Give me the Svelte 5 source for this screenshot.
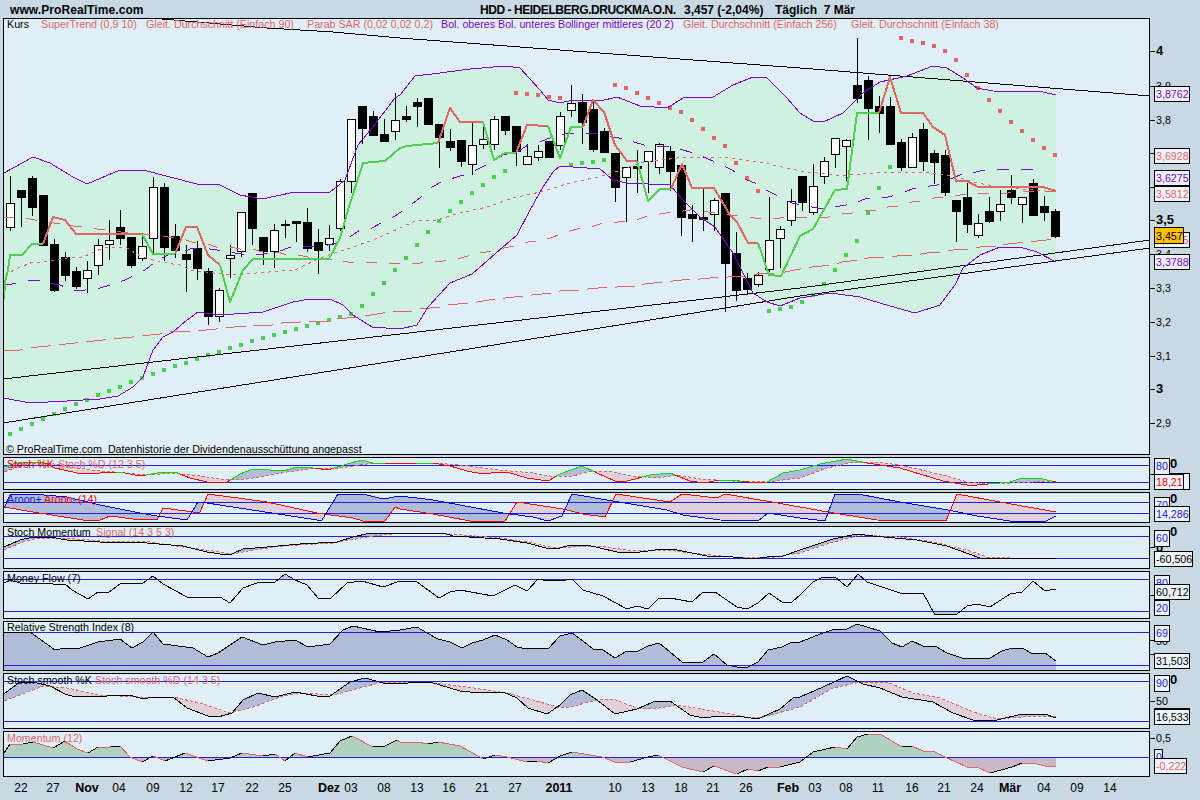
<script>
  const parse = (s) => s.trim().split(/\s+/).map((p) => p.split(',').map(Number));

  function interp(pts, x) {
    if (x <= pts[0][0]) return pts[0][1];
    for (let i = 1; i < pts.length; i++) {
      if (x <= pts[i][0]) {
        const [x0, y0] = pts[i - 1];
        const [x1, y1] = pts[i];
        return y0 + ((y1 - y0) * (x - x0)) / (x1 - x0 || 1);
      }
    }
    return pts[pts.length - 1][1];
  }

  const X0 = 4;
  const X1 = 1056;

  // polygons between two series, coloured by which one lies on top
  function between(a, b, above, below) {
    const out = [];
    let cur = null;
    const flush = () => {
      if (!cur) return;
      const fill = cur.up ? above : below;
      if (fill) out.push({ d: cur.t.concat(cur.b).join(' '), fill });
    };
    for (let x = X0; x <= X1; x++) {
      const ya = interp(a, x);
      const yb = typeof b === 'number' ? b : interp(b, x);
      const up = ya < yb;
      if (!cur || cur.up !== up) {
        if (cur) {
          cur.t.push(x + ',' + ya);
          cur.b.unshift(x + ',' + yb);
        }
        flush();
        cur = { up, t: [], b: [] };
      }
      cur.t.push(x + ',' + ya);
      cur.b.unshift(x + ',' + yb);
    }
    flush();
    return out;
  }

  // one series whose colour depends on a second series
  function splitBy(a, b, above, below) {
    const out = [];
    let cur = null;
    for (let x = X0; x <= X1; x++) {
      const ya = interp(a, x);
      const up = ya <= interp(b, x);
      if (!cur || cur.up !== up) {
        const prev = cur ? cur.p[cur.p.length - 1] : null;
        cur = { up, p: prev ? [prev] : [] };
        out.push(cur);
      }
      cur.p.push(x + ',' + ya);
    }
    return out.map((r) => ({ d: r.p.join(' '), stroke: r.up ? above : below }));
  }

  function slopeSegs(pts, rising, falling) {
    return pts.slice(1).map((p, i) => ({
      d: pts[i].join(',') + ' ' + p.join(','),
      stroke: p[1] < pts[i][1] ? rising : falling,
    }));
  }

  const BLUE = '#b0bcd8';
  const PINK = '#e0d0da';
  const RED = '#e06666';

  // [top, bottom, high, low, white]
  const candles = [
    [203,227,176,231,1],[190,197,190,227],[178,207,176,216],[195,245,195,245],[244,290,239,292],
    [257,275,252,281],[271,286,267,289],[270,278,261,293,1],[245,265,239,275,1],[240,244,220,260,1],
    [227,238,210,245],[237,265,237,268],[246,258,235,261,1],[187,238,177,255,1],[187,247,183,261],
    [236,250,224,258],[254,259,245,292],[248,268,241,280],[271,316,268,325],[290,316,288,322,1],
    [255,258,245,278,1],[212,251,212,257,1],[193,228,193,245],[237,251,237,265],[230,251,224,268,1],
    [224,225,220,238],[221,223,221,242],[222,248,208,252],[242,250,229,274],[238,244,225,251,1],
    [181,228,179,231,1],[119,181,119,193,1],[106,128,106,144],[116,135,111,135],[134,141,119,142],
    [120,131,93,140,1],[116,119,106,122],[102,106,98,127],[98,124,98,125],[124,137,124,168],
    [141,147,129,151],[140,161,140,167],[145,164,123,175,1],[139,144,127,149,1],[119,144,116,150,1],
    [116,130,116,135],[126,151,126,166],[156,164,144,164,1],[151,157,145,161,1],[141,157,141,157],
    [116,145,112,150,1],[103,110,85,117,1],[102,122,94,144],[109,149,102,152],[131,152,128,152],
    [153,187,153,202],[167,177,167,222,1],[166,168,150,193],[151,161,151,193,1],[144,167,143,174,1],
    [151,171,146,191],[165,217,165,236],[214,218,205,242],[217,219,189,231],[200,214,198,231,1],
    [193,263,193,312],[253,290,232,301],[278,289,273,295],[275,284,272,287,1],[240,269,197,272,1],
    [229,238,226,268,1],[201,220,189,226,1],[176,202,176,211],[186,212,164,215,1],[161,176,157,184,1],
    [138,154,138,168,1],[140,146,139,181,1],[85,98,38,103],[80,108,76,140],[106,113,96,133],
    [106,144,97,144],[142,167,139,171],[137,167,133,167,1],[129,161,123,171],[153,162,150,184],
    [155,192,150,196],[200,211,200,242],[197,224,183,233],[223,235,214,238,1],[211,221,197,223],
    [204,211,190,221,1],[190,197,175,204],[197,204,197,223,1],[183,215,179,216],[206,212,196,221],
    [211,236,209,238],
  ].map((c, i) => ({ x: 10.5 + 11 * i, top: c[0], bottom: c[1], high: c[2], low: c[3], white: !!c[4] }));

  const bolUp = parse(`4,173 33,157 50,163 73,177 87,184 120,170 143,170 170,177 197,184 220,185 240,195 262,199 295,192 330,192 345,180
    358,145 372,128 395,98 400,95 415,76 440,73 470,69 505,66 520,68 540,90 548,100 560,103 573,100 600,101 617,97 640,106 667,108 683,98
    713,97 733,85 753,77 767,78 787,98 800,113 813,121 823,122 843,113 863,93 880,82 907,76 933,66 947,68 963,78 977,88 993,91 1043,92 1056,95`);
  const bolLow = parse(`4,398 30,403 67,401 100,399 118,396 133,387 143,377 153,350 163,337 173,332 187,320 198,312 220,315 263,312 293,302
    310,299 330,299 343,305 353,315 372,327 400,329 417,325 428,307 450,283 472,274 503,247 517,235 530,210 543,187 553,172 560,166 600,169
    613,180 627,183 670,185 683,200 700,217 715,227 733,253 753,293 767,302 780,306 800,298 830,293 860,297 890,306 915,313 940,305 955,285
    963,268 980,255 1000,247 1020,247 1037,252 1056,262`);
  const bolFill = bolUp.map((p) => p.join(',')).concat(bolLow.slice().reverse().map((p) => p.join(','))).join(' ');

  const superTrend = [
    ['g', '4,299 5,282 8,270 10,255 22,255 32,244 43,244'],
    ['r', '43,244 53,217 65,220 76,234 142,234'],
    ['g', '142,234 153,254 175,254'],
    ['r', '175,254 186,227 197,227 208,255 220,265'],
    ['g', '220,265 230,302 243,270 253,259 329,259 340,238 348,210 363,163 385,161 400,148 407,146 438,143'],
    ['r', '438,143 450,108 460,122 483,122'],
    ['g', '483,122 494,160 505,153 516,153'],
    ['r', '516,153 527,125 548,126'],
    ['g', '548,126 560,158 571,127 583,127'],
    ['r', '583,127 593,100 604,112 615,145 627,161 637,161'],
    ['g', '637,161 648,201 660,189 671,189'],
    ['r', '671,189 682,164 692,188 714,188 730,215 737,222 748,243 758,243'],
    ['g', '758,243 769,275 781,276 800,236 813,229 835,190 847,189 857,113 879,113'],
    ['r', '879,113 890,77 901,113 923,113 933,127 945,135 956,181 967,181 978,187 1043,187 1056,191'],
  ];

  const sarGreen = parse(`10,434 21,429 32,424 43,419 54,414 65,409 76,404 87,400 98,395 109,391 120,387 131,382 142,378 153,374 164,370
    175,366 186,363 197,359 208,355 219,352 230,348 241,345 252,341 263,338 274,335 285,332 296,329 307,326 318,323 329,320 340,317 351,314
    362,306 373,294 384,283 395,270 406,258 417,245 428,232 439,221 450,211 461,202 472,193 483,185 494,177 505,171 571,165 582,163 593,162
    604,160 769,311 780,309 791,307 802,302 813,295 824,284 835,270 846,255 857,241 868,213 879,188 890,167`);
  const sarRed = parse(`516,93 527,94 538,95 549,97 560,98 615,85 626,88 637,93 648,98 659,103 670,108 681,112 692,120 703,129 714,138 725,146
    736,163 747,178 758,191 901,38 912,41 923,43 934,46 945,51 956,60 967,75 978,88 989,100 1000,111 1011,122 1022,131 1033,140 1044,148 1055,155`);

  const bolMid = `4,285 12,284 25,281 35,280 50,283 60,285 72,290 85,290 100,288 110,285 125,280 145,270 155,262 168,255 180,253 193,248 203,248
    217,250 227,252 242,254 252,255 263,254 275,253 288,248 300,247 313,246 323,246 337,243 347,239 360,230 372,228 383,222 395,216 408,207
    420,198 432,187 443,181 457,177 467,174 480,168 492,162 503,155 517,152 528,145 540,142 557,135 565,134 577,133 588,133 600,134 613,137
    625,139 637,143 648,146 660,146 672,146 683,150 697,154 708,159 720,164 732,170 745,179 757,184 768,191 780,197 792,203 817,208 828,208
    840,206 852,204 865,199 876,198 888,197 900,194 912,189 924,187 937,185 948,180 960,175 972,173 984,170 997,170 1008,169 1020,169 1032,169 1044,173`;
  const ma256 = `3,350 20,350 28,348 48,346 57,345 75,343 85,342 103,340 113,339 132,337 140,336 160,334 170,332 188,331 197,331 216,329 225,328 243,326
    253,326 272,325 282,323 300,322 308,321 328,321 337,319 357,317 365,316 383,313 393,312 400,311 412,311 420,309 440,307 448,305 468,303 477,302
    495,299 505,298 523,296 532,295 552,293 560,291 580,290 588,289 608,287 617,287 637,286 645,284 663,282 673,281 692,279 700,279 720,277 728,277
    748,276 757,274 777,273 785,272 800,269 812,267 832,265 842,262 858,260 868,258 888,257 897,256 915,255 927,253 943,252 953,250 972,249 980,247
    998,246 1008,244 1027,242 1037,241 1055,239`;
  const ma90 = `3,217 10,217 24,218 35,220 73,226 83,227 97,229 108,230 121,232 133,233 144,234 157,235 168,237 180,238 192,242 203,242 216,247 230,247 240,249
    252,249 263,252 277,252 288,255 299,255 312,258 323,258 337,261 348,262 360,262 372,262 383,263 395,263 408,263 420,263 433,262 443,261 457,259
    468,256 480,253 492,251 504,248 515,246 528,242 540,241 553,237 563,233 577,229 588,228 600,224 612,223 625,221 636,220 648,216 660,214 673,212
    683,211 697,209 708,212 745,217 755,218 768,218 780,218 800,217 817,217 828,217 842,214 852,213 865,211 876,210 888,207 900,206 912,202 924,201
    937,197 948,197 960,195 972,194 984,193 997,193 1008,193 1033,191 1056,192`;
  const ma38 = `5,275 18,268 33,262 43,262 67,258 83,257 103,248 117,247 127,248 140,256 160,262 180,265 190,270 230,275 295,270 320,258 350,248 373,240 400,228
    417,220 437,220 460,213 487,207 513,198 540,192 570,183 607,175 640,163 677,158 720,157 760,162 800,171 833,175 850,175 877,173 900,172 933,173
    957,177 977,183 1000,187 1033,190 1056,192`;

  const trends = ['162,19 267,28 333,32 400,38 800,68 1150,96', '3,379 400,334 800,288 1150,240', '3,423 400,360 800,296 1150,248'];

  const k = parse(`4,467 13,464 30,462 43,462 55,468 77,473 100,473 120,472 140,476 163,472 175,472 190,478 207,482 227,482 240,474 253,469 270,470 283,471
    297,467 313,468 328,470 347,464 362,460 373,463 400,464 417,463 433,463 450,466 467,471 483,474 500,472 507,472 527,478 548,481 560,474 582,466 597,473
    615,481 627,481 650,475 670,473 690,481 703,483 720,480 740,481 757,483 767,482 783,473 800,470 820,464 847,459 867,463 900,468 943,481 967,485 977,485
    1000,483 1010,482 1022,478 1043,479 1056,482`);
  const d = parse(`4,472 17,467 33,463 47,463 60,465 77,468 100,471 127,473 147,475 173,473 200,476 220,479 240,480 260,477 287,472 317,468 340,468 367,464 400,463
    433,463 460,465 500,470 533,473 550,476 573,476 587,472 607,471 633,476 657,478 677,475 700,479 733,481 767,482 800,478 827,468 850,463 877,462 900,465
    943,475 967,482 990,484 1010,483 1033,482 1056,481`);
  const aroonUp = parse(`4,508 10,495 33,494 67,497 100,505 140,513 157,516 187,520 198,502 207,503 317,520 322,520 338,494 363,494 383,499 400,496 433,500 503,513 510,514
    533,517 548,521 562,516 572,494 613,501 667,510 683,515 720,520 758,521 768,513 800,518 825,521 835,494 858,494 900,502 948,510 977,516 1010,521 1046,521 1056,516`);
  const aroonDown = parse(`4,507 33,512 83,520 100,520 110,516 133,519 157,520 163,508 193,512 200,512 208,494 267,502 317,513 353,518 363,521 385,521 395,507 400,509 433,514
    470,521 505,521 517,502 563,509 583,514 605,517 616,494 670,502 682,494 717,498 725,494 772,502 800,507 828,512 877,520 946,521 957,494 1000,502 1056,512`);
  const smi = parse(`4,547 20,540 33,537 50,537 67,540 100,542 133,542 147,543 183,546 207,552 220,554 232,554 243,549 267,547 300,544 337,542 353,537 370,533 443,533 453,536
    500,539 527,543 550,549 560,548 570,545 587,545 617,552 640,552 663,549 677,550 707,556 733,557 753,559 767,557 783,556 800,550 833,539 857,534 873,536 917,540
    947,546 980,558 1056,558`);
  const smiSig = parse(`4,550 20,543 37,538 67,538 100,541 150,542 183,547 213,551 233,554 253,550 283,546 333,543 367,537 400,533 450,534 500,538 527,542 550,547 573,547 600,546
    633,551 667,550 700,554 733,557 767,558 800,553 830,543 860,535 900,537 933,542 967,550 987,557 1010,558`);
  const mfi = parse(`4,583 10,580 20,583 33,584 43,583 53,584 65,584 72,590 88,599 98,592 108,593 120,584 143,583 153,576 163,584 187,597 220,597 230,603 243,588 257,583 275,582
    285,574 295,580 307,585 318,598 330,599 347,583 362,581 383,587 400,581 417,582 439,598 450,592 460,590 493,596 515,585 527,591 538,579 543,580 566,580 572,579 583,590
    603,596 627,609 637,606 648,609 658,599 670,598 692,602 703,592 715,592 737,607 747,609 758,603 769,593 782,602 792,602 800,595 813,582 823,577 835,577 847,587 858,574
    867,582 900,593 923,593 935,615 957,614 967,606 977,604 990,607 1010,594 1022,592 1033,581 1045,591 1056,589`);
  const rsi = parse(`4,632 30,632 55,650 65,648 77,649 98,642 120,639 132,648 143,642 153,632 163,644 193,648 208,657 218,653 242,637 263,645 275,642 295,640 308,647 330,644 343,630
    353,626 380,632 400,630 417,627 427,633 438,639 450,642 462,648 472,643 483,640 495,635 507,640 517,647 527,649 537,648 548,649 560,636 572,633 583,641 593,649 603,650 615,658
    627,651 638,651 648,646 659,643 670,652 682,662 703,662 714,654 727,665 737,667 748,667 758,662 768,650 782,647 792,642 800,642 823,633 835,629 847,629 857,624 880,631 892,643
    902,647 912,641 923,646 935,646 947,653 965,659 990,658 1002,651 1012,648 1022,648 1033,654 1045,653 1056,661`);
  const ss = parse(`4,694 20,682 33,682 50,686 65,694 75,697 107,696 117,695 133,696 143,699 153,697 173,697 187,708 208,716 218,717 232,713 243,700 258,693 275,697 295,692 317,696 330,696
    350,682 365,678 383,683 400,684 417,682 430,682 460,691 480,693 503,692 517,698 528,708 547,714 560,705 570,695 582,690 597,700 615,714 637,709 653,702 670,701 690,715 703,718
    720,716 737,716 758,719 780,709 793,698 800,697 823,687 847,676 863,684 880,688 902,697 933,702 953,713 973,720 993,721 1022,714 1045,714 1056,718`);
  const ssD = parse(`4,701 20,695 43,686 67,688 100,695 140,697 173,697 200,703 230,713 253,707 283,696 300,693 333,695 360,688 383,682 400,682 433,683 467,687 507,693 540,702 557,707 570,707
    597,700 613,699 637,708 653,709 677,705 713,711 747,717 763,717 800,707 833,688 860,682 887,682 913,693 940,698 973,712 997,719 1033,716 1056,716`);
  const mom = parse(`4,753 10,744 23,744 33,742 53,748 65,741 77,749 88,753 98,747 110,747 120,746 130,757 142,762 153,756 165,761 185,753 208,761 230,758 242,753 263,756 275,754 285,761 295,753
    308,757 330,753 340,741 352,736 373,747 385,746 397,740 400,742 417,742 428,744 438,742 460,746 480,757 483,759 495,755 507,757 527,762 537,761 548,763 560,756 572,752 602,757 615,762
    630,762 648,757 658,755 682,767 703,772 714,766 737,774 748,769 758,771 768,767 780,767 800,762 813,752 835,747 847,749 857,737 868,734 880,734 902,747 912,746 923,751 933,751 945,757
    967,767 977,767 990,773 1012,767 1022,763 1033,763 1045,766 1056,767`);

  const str = (pts) => pts.map((p) => p.join(',')).join(' ');
  const line = (pts, stroke, dash) => ({ d: str(pts), stroke, dash });

  const panels = [
    {
      id: 'p1', top: 457, bottom: 489, next: 492, levels: [465, 482],
      fills: between(k, d, BLUE, PINK),
      lines: [line(d, RED, '3 2'), ...splitBy(k, d, '#00e000', '#ff0000')],
      legend: [[7, 468, 'Stoch %K', 'red'], [58, 468, 'Stoch %D (12 3 5)', 'pink']],
      ticks: [474],
      back: [[1170, 468, '0', 'bold black']],
      boxes: [[1154, 473, 35, 16, '', 'pink'], [1154, 458, 15, 16, '80', 'blue'], [1154, 474, 29, 15, '18,21', 'red']],
    },
    {
      id: 'p2', top: 492, bottom: 522, next: 526, levels: [502, 513],
      fills: between(aroonUp, aroonDown, BLUE, PINK),
      lines: [line(aroonDown, '#ff0000'), line(aroonUp, '#0000ff')],
      legend: [[7, 503, 'Aroon+', 'blue'], [44, 503, 'Aroon-', 'red'], [78, 503, '(14)', 'red']],
      ticks: [],
      back: [[1170, 503, '0', 'bold black']],
      boxes: [[1154, 497, 15, 12, '70', 'blue'], [1154, 506, 35, 15, '14,286', 'blue']],
    },
    {
      id: 'p3', top: 526, bottom: 568, next: 571, levels: [536, 558],
      fills: between(smi, smiSig, BLUE, PINK),
      lines: [line(smiSig, RED, '3 2'), line(smi, '#000')],
      legend: [[7, 536, 'Stoch Momentum', 'black'], [96, 536, 'Signal (14 3 5 3)', 'pink']],
      ticks: [547],
      back: [[1170, 536, '0', 'bold black'], [1156, 552, '0', 'bold black']],
      boxes: [[1154, 530, 15, 16, '60', 'blue'], [1154, 551, 38, 15, '-60,506', 'black']],
    },
    {
      id: 'p4', top: 571, bottom: 618, next: 621, levels: [579, 611],
      fills: [...between(mfi, 579, '#d8c4c8', null), ...between(mfi, 611, null, '#b0d0c0')],
      lines: [line(mfi, '#000')],
      legend: [[7, 582, 'Money Flow (7)', 'black']],
      ticks: [595],
      back: [],
      boxes: [[1154, 575, 15, 12, '80', 'blue'], [1154, 584, 35, 15, '60,712', 'black'], [1154, 600, 15, 15, '20', 'blue']],
    },
    {
      id: 'p5', top: 621, bottom: 670, next: 673, levels: [632, 665],
      fills: [{ d: '4,670 ' + str(rsi) + ' 1056,670', fill: BLUE }],
      lines: [line(rsi, '#000')],
      legend: [[7, 631, 'Relative Strength Index (8)', 'black']],
      ticks: [640, 654],
      back: [[1156, 645, '50', 'black']],
      boxes: [[1154, 625, 15, 16, '69', 'blue'], [1154, 653, 35, 15, '31,503', 'black']],
    },
    {
      id: 'p6', top: 673, bottom: 728, next: 731, levels: [681, 721],
      fills: between(ss, ssD, BLUE, PINK),
      lines: [line(ssD, RED, '3 2'), line(ss, '#000')],
      legend: [[7, 684, 'Stoch smooth %K', 'black'], [95, 684, 'Stoch smooth %D (14 3 5)', 'pink']],
      ticks: [701],
      back: [[1170, 684, '0', 'bold black'], [1156, 705, '50', 'black']],
      boxes: [[1154, 708, 35, 2, '', 'black'], [1154, 709, 35, 15, '16,533', 'black'], [1154, 675, 15, 16, '90', 'blue']],
    },
    {
      id: 'p7', top: 731, bottom: 776, next: 778, levels: [757],
      fills: between(mom, 757, '#b0d0c0', '#c8b8c8'),
      lines: slopeSegs(mom, '#000', RED),
      legend: [[7, 742, 'Momentum (12)', 'pink']],
      ticks: [738],
      back: [[1156, 742, '0,5', 'black']],
      boxes: [[1154, 749, 8, 12, '0', 'blue'], [1154, 758, 32, 15, '-0,222', 'pink']],
    },
  ];

  const priceTicks = [
    [51, '4', true], [86, '3,9'], [120, '3,8'], [153, ''], [187, ''], [220, '3,5', true],
    [254, '3,4'], [288, '3,3'], [322, '3,2'], [356, '3,1'], [389, '3', true], [423, '2,9'],
  ];
  const priceBoxes = [
    [86, '3,8762', 'purple'], [148, '3,6928', 'pink'], [170, '3,6275', 'purple'],
    [186, '3,5812', 'pink'], [232, '3,4425', 'pink'], [254, '3,3788', 'purple'],
  ];

  const dates = [
    [21, '22'], [53, '27'], [87, 'Nov', 1], [119, '04'], [153, '09'], [186, '12'], [218, '17'], [252, '22'], [285, '25'],
    [329, 'Dez', 1], [351, '03'], [384, '08'], [417, '13'], [449, '16'], [482, '21'], [515, '27'], [559, '2011', 1],
    [615, '10'], [648, '13'], [681, '18'], [713, '21'], [746, '26'], [788, 'Feb', 1], [815, '03'], [846, '08'], [878, '11'],
    [912, '16'], [944, '21'], [977, '24'], [1010, 'Mär', 1], [1044, '04'], [1077, '09'], [1110, '14'],
  ];
</script>

<main class="page">
  <header class="title">
    <span class="site">www.ProRealTime.com</span>
    <span class="name">HDD - HEIDELBERG.DRUCKMA.O.N.</span>
    <span class="quote">3,457 (-2,04%)</span>
    <span class="period">Täglich&nbsp; 7 Mär</span>
  </header>

  <svg class="chart" width="1200" height="437" viewBox="0 18 1200 437">
    <defs>
      <clipPath id="clip-main"><rect x="4" y="19" width="1145" height="435" /></clipPath>
    </defs>
    <rect class="plot-bg" x="3.5" y="18.5" width="1146" height="436" />
    <g class="crisp" clip-path="url(#clip-main)">
      <polygon class="bol-fill" points={bolFill} />
      {#each candles as c}
        <line class="wick" x1={c.x} x2={c.x} y1={c.high} y2={c.low} />
        {#if c.white}
          <rect class="body-white" x={c.x - 4} y={c.top + 0.5} width="8" height={c.bottom - c.top} />
        {:else}
          <rect class="body-black" x={c.x - 4.5} y={c.top} width="9" height={c.bottom - c.top + 1} />
        {/if}
      {/each}
      {#each sarGreen as p}<rect class="sar-green" x={p[0] - 2} y={p[1] - 2} width="4" height="4" />{/each}
      {#each sarRed as p}<rect class="sar-red" x={p[0] - 2} y={p[1] - 2} width="4" height="4" />{/each}
      {#each trends as t}<polyline class="trend" points={t} />{/each}
      <polyline class="ma256" points={ma256} />
      <polyline class="ma90" points={ma90} />
      <polyline class="ma38" points={ma38} />
      <polyline class="bol-mid" points={bolMid} />
      <polyline class="bol" points={str(bolUp)} />
      <polyline class="bol" points={str(bolLow)} />
      {#each superTrend as s}
        <polyline class={s[0] === 'g' ? 'st-green' : 'st-red'} points={s[1]} />
      {/each}
    </g>
    <text class="txt black" x="7" y="28">Kurs</text>
    <text class="txt pink" x="41" y="28">SuperTrend (0,9 10)</text>
    <text class="txt pink" x="146" y="28">Gleit. Durchschnitt (Einfach 90)</text>
    <text class="txt pink" x="307" y="28">Parab SAR (0,02 0,02 0,2)</text>
    <text class="txt purple" x="441" y="28">Bol. oberes Bol. unteres Bollinger mittleres (20 2)</text>
    <text class="txt pink" x="683" y="28">Gleit. Durchschnitt (Einfach 256)</text>
    <text class="txt pink" x="851" y="28">Gleit. Durchschnitt (Einfach 38)</text>
    <text class="txt black" x="6" y="453">© ProRealTime.com&nbsp; Datenhistorie der Dividendenausschüttung angepasst</text>

    {#each priceTicks as t}
      <line class="tick" x1="1150" x2="1155" y1={t[0] + 0.5} y2={t[0] + 0.5} />
      {#if t[1]}<text class="txt black" class:bold={t[2]} x="1156" y={t[0] + 4}>{t[1]}</text>{/if}
    {/each}
    {#each priceBoxes as b}
      <rect class="box" x="1154.5" y={b[0] + 0.5} width="35" height="15" />
      <text class="txt {b[2]}" x="1156" y={b[0] + 12}>{b[1]}</text>
    {/each}
    <rect class="box-last" x="1154.5" y="227.5" width="29" height="16" />
    <text class="txt black" x="1156" y="240">3,457</text>
  </svg>

  {#each panels as p}
    <svg class="chart" width="1200" height={p.next - p.top - 2} viewBox="0 {p.top} 1200 {p.next - p.top - 2}">
      <defs>
        <clipPath id={'clip-' + p.id}><rect x="4" y={p.top + 1} width="1145" height={p.bottom - p.top - 1} /></clipPath>
      </defs>
      <rect class="plot-bg" x="3.5" y={p.top + 0.5} width="1146" height={p.bottom - p.top} />
      <g class="crisp" clip-path={'url(#clip-' + p.id + ')'}>
        {#each p.fills as f}<polygon points={f.d} fill={f.fill} />{/each}
        {#each p.levels as y}<line class="level" x1="4" x2="1149" y1={y + 0.5} y2={y + 0.5} />{/each}
        {#each p.lines as l}
          <polyline class="series" points={l.d} stroke={l.stroke} stroke-dasharray={l.dash} />
        {/each}
      </g>
      {#each p.legend as l}<text class="txt {l[3]}" x={l[0]} y={l[1]}>{l[2]}</text>{/each}
      {#each p.ticks as y}<line class="tick" x1="1150" x2="1155" y1={y + 0.5} y2={y + 0.5} />{/each}
      {#each p.back as b}<text class="txt {b[3]}" x={b[0]} y={b[1]}>{b[2]}</text>{/each}
      {#each p.boxes as b}
        <rect class="box" x={b[0] + 0.5} y={b[1] + 0.5} width={b[2]} height={b[3]} />
        <text class="txt {b[5]}" x={b[0] + 2} y={b[1] + 12}>{b[4]}</text>
      {/each}
    </svg>
  {/each}

  <svg class="chart" width="1200" height="22" viewBox="0 778 1200 22">
    {#each dates as t}
      <text class="txt date black" class:bold={t[2]} x={t[0]} y="792">{t[1]}</text>
    {/each}
  </svg>
</main>

<style>
  :global(body) {
    margin: 0;
    background: #c8d9e4;
  }

  .page {
    width: 1200px;
    height: 800px;
    overflow: hidden;
    display: flex;
    flex-direction: column;
    gap: 2px;
    background: #c8d9e4;
    font-family: "Liberation Sans", Arial, sans-serif;
  }

  .title {
    height: 16px;
    box-sizing: border-box;
    padding: 3px 0 0 10px;
    display: flex;
    align-items: center;
    font-size: 12px;
    font-weight: bold;
    color: #000;
    white-space: nowrap;
  }

  .site { width: 470px; letter-spacing: 0.08px; }
  .name { width: 204px; letter-spacing: -0.45px; }
  .quote { width: 91px; }

  .chart {
    display: block;
    flex: none;
    overflow: visible;
  }

  .crisp { shape-rendering: crispEdges; }

  .plot-bg {
    fill: #e0eff7;
    stroke: #000;
    stroke-width: 1;
    shape-rendering: crispEdges;
  }

  .bol-fill { fill: #d0f0e2; }

  .wick { stroke: #000; stroke-width: 1; }
  .body-black { fill: #000; }
  .body-white { fill: #fff; stroke: #000; stroke-width: 1; }
  .sar-green { fill: #48d050; }
  .sar-red { fill: #e06666; }

  polyline { fill: none; stroke-linejoin: round; }

  .trend { stroke: #000; stroke-width: 1; }
  .bol { stroke: #8000c8; stroke-width: 1; }
  .bol-mid { stroke: #8000c8; stroke-width: 1; stroke-dasharray: 12 12; }
  .ma256 { stroke: #e06666; stroke-width: 1; stroke-dasharray: 20 8; }
  .ma90 { stroke: #e06666; stroke-width: 1; stroke-dasharray: 11 12; }
  .ma38 { stroke: #e06666; stroke-width: 1; stroke-dasharray: 3 4; }
  .st-green { stroke: #50d050; stroke-width: 2; }
  .st-red { stroke: #e06666; stroke-width: 2; }

  .level { stroke: #2020d8; stroke-width: 1; }
  .series { stroke-width: 1; }

  .tick {
    stroke: #000;
    stroke-width: 1;
    shape-rendering: crispEdges;
  }

  .box {
    fill: #eef4fb;
    stroke: #000;
    stroke-width: 1;
    shape-rendering: crispEdges;
  }

  .box-last {
    fill: #ffc000;
    stroke: #000;
    stroke-width: 1;
    shape-rendering: crispEdges;
  }

  .txt {
    font-family: "Liberation Sans", Arial, sans-serif;
    font-size: 10.7px;
    white-space: pre;
  }

  .date {
    font-size: 12px;
    text-anchor: middle;
  }

  .bold {
    font-weight: bold;
    font-size: 13px;
  }

  .date.bold { font-size: 12.5px; }

  .black { fill: #000; }
  .pink { fill: #e06666; }
  .purple { fill: #8000c8; }
  .red { fill: #ff0000; }
  .blue { fill: #2020e0; }
</style>
